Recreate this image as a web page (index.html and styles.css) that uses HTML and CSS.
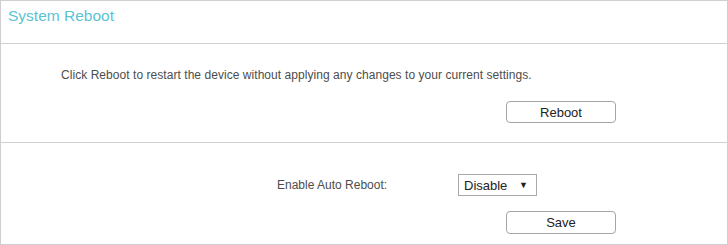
FILE: index.html
```html
<!DOCTYPE html>
<html>
<head>
<meta charset="utf-8">
<link rel="stylesheet" href="styles.css">
</head>
<body>
<div class="panel">
  <div class="panel-head">
    <h1 class="title">System Reboot</h1>
  </div>
  <div class="section reboot-section">
    <p class="desc">Click Reboot to restart the device without applying any changes to your current settings.</p>
    <div class="btn-row">
      <button class="btn">Reboot</button>
    </div>
  </div>
  <div class="section auto-section">
    <div class="field-row">
      <span class="label">Enable Auto Reboot:</span>
      <div class="select"><span class="select-value">Disable</span><span class="select-arrow">▼</span></div>
    </div>
    <div class="btn-row">
      <button class="btn">Save</button>
    </div>
  </div>
</div>
</body>
</html>
```

FILE: styles.css
```css
* { box-sizing: border-box; }
html, body { margin: 0; padding: 0; background: #fff; }
body { font-family: "Liberation Sans", Arial, sans-serif; color: #4a4a4a; }

.panel {
  width: 728px;
  height: 245px;
  border: 1px solid #cfcfcf;
  display: flex;
  flex-direction: column;
}
.panel-head {
  height: 43px;
  border-bottom: 1px solid #cfcfcf;
  padding: 6px 0 0 7px;
}
.title {
  margin: 0;
  font-size: 15.5px;
  font-weight: normal;
  color: #5cc3d3;
  line-height: 18px;
}
.reboot-section {
  height: 99px;
  border-bottom: 1px solid #cfcfcf;
  padding-top: 24px;
}
.desc {
  margin: 0 0 0 60px;
  font-size: 12px;
  line-height: 14px;
  letter-spacing: 0.05px;
  color: #4d4d4d;
}
.btn-row {
  display: flex;
  padding-left: 505px;
}
.reboot-section .btn-row { margin-top: 19px; }
.btn {
  width: 110px;
  height: 22px;
  border: 1px solid #a6a6a6;
  border-radius: 4px;
  background: #fff;
  font-family: "Liberation Sans", Arial, sans-serif;
  font-size: 13px;
  color: #222;
  padding: 0;
}
.auto-section { flex: 1; padding-top: 31px; }
.field-row {
  display: flex;
  align-items: center;
  height: 22px;
}
.label {
  width: 181px;
  margin-left: 276px;
  font-size: 12px;
  color: #4d4d4d;
}
.select {
  width: 79px;
  height: 22px;
  border: 1px solid #a9a9a9;
  display: flex;
  align-items: center;
  justify-content: space-between;
  padding: 0 8px 0 5px;
  font-size: 13px;
  color: #222;
}
.select-arrow { font-size: 9px; color: #222; }
.auto-section .btn-row { margin-top: 15px; }
.auto-section .btn { height: 23px; }
```
